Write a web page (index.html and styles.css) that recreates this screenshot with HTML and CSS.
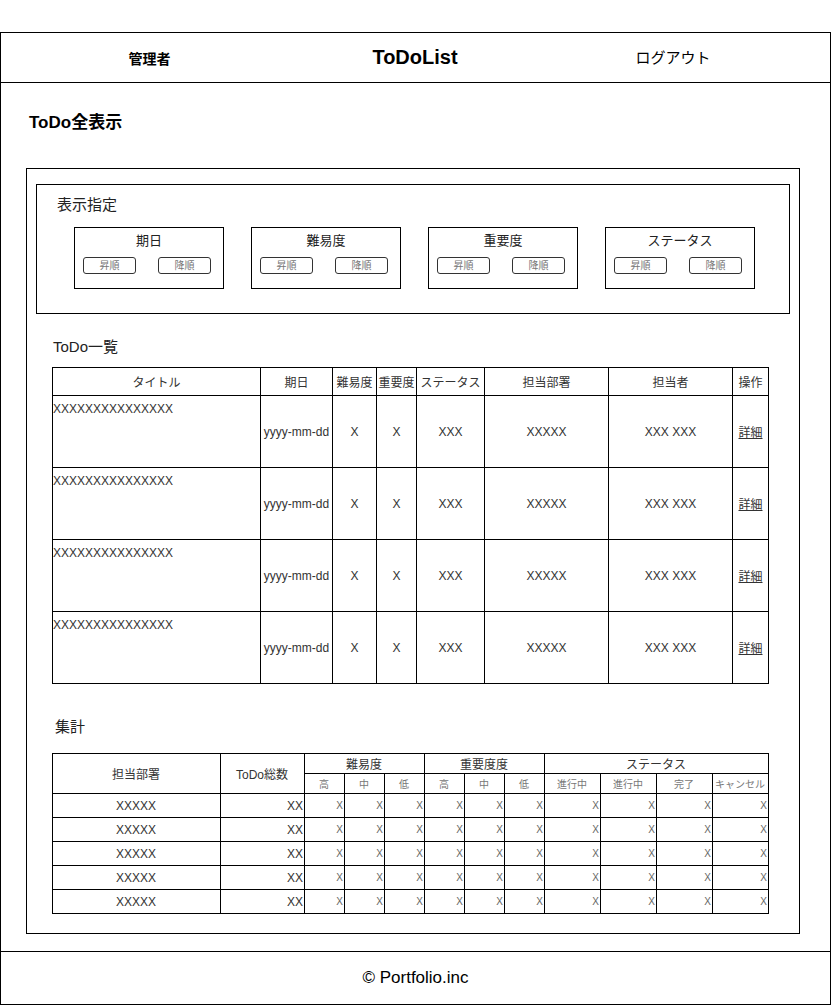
FILE: index.html
```html
<!DOCTYPE html>
<html lang="ja">
<head>
    <meta charset="UTF-8">
    <meta name="viewport" content="width=device-width, initial-scale=1.0">
    <title>ToDoList</title>
    <link rel="stylesheet" href="styles.css">
</head>
<body>
    <div class="frame">
        <header class="topbar">
            <div class="topbar-user">管理者</div>
            <div class="topbar-title">ToDoList</div>
            <div class="topbar-logout">ログアウト</div>
        </header>

        <main class="main">
            <h1 class="page-title">ToDo全表示</h1>

            <div class="panel">
                <section class="filter">
                    <h2 class="section-title">表示指定</h2>
                    <div class="filter-groups">
                        <div class="filter-group">
                            <div class="filter-label">期日</div>
                            <div class="filter-buttons">
                                <button class="sort-btn">昇順</button>
                                <button class="sort-btn">降順</button>
                            </div>
                        </div>
                        <div class="filter-group">
                            <div class="filter-label">難易度</div>
                            <div class="filter-buttons">
                                <button class="sort-btn">昇順</button>
                                <button class="sort-btn">降順</button>
                            </div>
                        </div>
                        <div class="filter-group">
                            <div class="filter-label">重要度</div>
                            <div class="filter-buttons">
                                <button class="sort-btn">昇順</button>
                                <button class="sort-btn">降順</button>
                            </div>
                        </div>
                        <div class="filter-group">
                            <div class="filter-label">ステータス</div>
                            <div class="filter-buttons">
                                <button class="sort-btn">昇順</button>
                                <button class="sort-btn">降順</button>
                            </div>
                        </div>
                    </div>
                </section>

                <section class="list">
                    <h2 class="section-title">ToDo一覧</h2>
                    <table class="todo-table">
                        <colgroup>
                            <col style="width:208px">
                            <col style="width:72px">
                            <col style="width:44px">
                            <col style="width:40px">
                            <col style="width:68px">
                            <col style="width:124px">
                            <col style="width:124px">
                            <col style="width:36px">
                        </colgroup>
                        <thead>
                            <tr>
                                <th>タイトル</th>
                                <th>期日</th>
                                <th>難易度</th>
                                <th>重要度</th>
                                <th>ステータス</th>
                                <th>担当部署</th>
                                <th>担当者</th>
                                <th>操作</th>
                            </tr>
                        </thead>
                        <tbody>
                            <tr>
                                <td class="todo-title">XXXXXXXXXXXXXXX</td>
                                <td>yyyy-mm-dd</td>
                                <td>X</td>
                                <td>X</td>
                                <td>XXX</td>
                                <td>XXXXX</td>
                                <td>XXX XXX</td>
                                <td><a href="#" class="detail-link">詳細</a></td>
                            </tr>
                            <tr>
                                <td class="todo-title">XXXXXXXXXXXXXXX</td>
                                <td>yyyy-mm-dd</td>
                                <td>X</td>
                                <td>X</td>
                                <td>XXX</td>
                                <td>XXXXX</td>
                                <td>XXX XXX</td>
                                <td><a href="#" class="detail-link">詳細</a></td>
                            </tr>
                            <tr>
                                <td class="todo-title">XXXXXXXXXXXXXXX</td>
                                <td>yyyy-mm-dd</td>
                                <td>X</td>
                                <td>X</td>
                                <td>XXX</td>
                                <td>XXXXX</td>
                                <td>XXX XXX</td>
                                <td><a href="#" class="detail-link">詳細</a></td>
                            </tr>
                            <tr>
                                <td class="todo-title">XXXXXXXXXXXXXXX</td>
                                <td>yyyy-mm-dd</td>
                                <td>X</td>
                                <td>X</td>
                                <td>XXX</td>
                                <td>XXXXX</td>
                                <td>XXX XXX</td>
                                <td><a href="#" class="detail-link">詳細</a></td>
                            </tr>
                        </tbody>
                    </table>
                </section>

                <section class="summary">
                    <h2 class="section-title">集計</h2>
                    <table class="summary-table">
                        <colgroup>
                            <col style="width:168px">
                            <col style="width:84px">
                            <col style="width:40px">
                            <col style="width:40px">
                            <col style="width:40px">
                            <col style="width:40px">
                            <col style="width:40px">
                            <col style="width:40px">
                            <col style="width:56px">
                            <col style="width:56px">
                            <col style="width:56px">
                            <col style="width:56px">
                        </colgroup>
                        <thead>
                            <tr class="head-top">
                                <th rowspan="2">担当部署</th>
                                <th rowspan="2">ToDo総数</th>
                                <th colspan="3">難易度</th>
                                <th colspan="3">重要度度</th>
                                <th colspan="4">ステータス</th>
                            </tr>
                            <tr class="head-sub">
                                <th>高</th>
                                <th>中</th>
                                <th>低</th>
                                <th>高</th>
                                <th>中</th>
                                <th>低</th>
                                <th>進行中</th>
                                <th>進行中</th>
                                <th>完了</th>
                                <th>キャンセル</th>
                            </tr>
                        </thead>
                        <tbody>
                            <tr>
                                <td class="dept">XXXXX</td>
                                <td class="total">XX</td>
                                <td>X</td><td>X</td><td>X</td>
                                <td>X</td><td>X</td><td>X</td>
                                <td>X</td><td>X</td><td>X</td><td>X</td>
                            </tr>
                            <tr>
                                <td class="dept">XXXXX</td>
                                <td class="total">XX</td>
                                <td>X</td><td>X</td><td>X</td>
                                <td>X</td><td>X</td><td>X</td>
                                <td>X</td><td>X</td><td>X</td><td>X</td>
                            </tr>
                            <tr>
                                <td class="dept">XXXXX</td>
                                <td class="total">XX</td>
                                <td>X</td><td>X</td><td>X</td>
                                <td>X</td><td>X</td><td>X</td>
                                <td>X</td><td>X</td><td>X</td><td>X</td>
                            </tr>
                            <tr>
                                <td class="dept">XXXXX</td>
                                <td class="total">XX</td>
                                <td>X</td><td>X</td><td>X</td>
                                <td>X</td><td>X</td><td>X</td>
                                <td>X</td><td>X</td><td>X</td><td>X</td>
                            </tr>
                            <tr>
                                <td class="dept">XXXXX</td>
                                <td class="total">XX</td>
                                <td>X</td><td>X</td><td>X</td>
                                <td>X</td><td>X</td><td>X</td>
                                <td>X</td><td>X</td><td>X</td><td>X</td>
                            </tr>
                        </tbody>
                    </table>
                </section>
            </div>
        </main>

        <footer class="footer">© Portfolio.inc</footer>
    </div>
</body>
</html>
```

FILE: styles.css
```css
body {
    margin: 0;
    padding-top: 32px;
    font-family: "Liberation Sans", "Noto Sans CJK JP", sans-serif;
    color: #000;
    background: #fff;
}

.frame {
    box-sizing: border-box;
    width: 831px;
    border: 1px solid #000;
}

/* header */
.topbar {
    display: grid;
    grid-template-columns: 297px 234px 1fr;
    align-items: center;
    height: 49px;
    padding-right: 16px;
    border-bottom: 1px solid #000;
}
.topbar-user {
    text-align: center;
    font-size: 14px;
    font-weight: bold;
}
.topbar-title {
    text-align: center;
    font-size: 20px;
    font-weight: bold;
}
.topbar-logout {
    text-align: center;
    font-size: 15px;
    margin-top: -2px;
}

/* main */
.main {
    padding: 30px 0 17px 25px;
}
.page-title {
    margin: 0 0 35px 3px;
    font-size: 17px;
    line-height: 20px;
    font-weight: bold;
}
.panel {
    box-sizing: border-box;
    width: 774px;
    border: 1px solid #000;
    padding: 15px 9px 19px 9px;
}
.section-title {
    margin: 0;
    font-size: 15px;
    line-height: 20px;
    font-weight: normal;
    color: #222;
}

/* filter */
.filter {
    box-sizing: border-box;
    height: 130px;
    border: 1px solid #000;
    padding: 10px 0 0 20px;
}
.filter-groups {
    display: flex;
    gap: 27px;
    margin-top: 12px;
    padding-left: 17px;
}
.filter-group {
    box-sizing: border-box;
    width: 150px;
    height: 62px;
    border: 1px solid #000;
    padding-top: 5px;
}
.filter-label {
    text-align: center;
    font-size: 13px;
    line-height: 16px;
    color: #222;
}
.filter-buttons {
    display: flex;
    gap: 22px;
    margin-top: 8px;
    padding-left: 8px;
}
.sort-btn {
    box-sizing: border-box;
    width: 53px;
    height: 17px;
    padding: 0;
    border: 1px solid #333;
    border-radius: 3px;
    background: #fff;
    font-family: inherit;
    font-size: 10px;
    line-height: 15px;
    color: #777;
}

/* todo list */
.list {
    padding: 23px 0 0 16px;
}
.list .section-title {
    margin-left: 1px;
}
.todo-table,
.summary-table {
    border-collapse: collapse;
    table-layout: fixed;
    width: 716px;
    color: #333;
}
.todo-table {
    margin-top: 10px;
}
.todo-table th,
.todo-table td {
    border: 1px solid #000;
    padding: 0;
    text-align: center;
    font-size: 12px;
    font-weight: normal;
    white-space: nowrap;
    overflow: hidden;
}
.todo-table th {
    height: 27px;
}
.todo-table td {
    height: 71px;
}
.todo-table .todo-title {
    height: 65px;
    text-align: left;
    vertical-align: top;
    padding-top: 6px;
}
.detail-link {
    color: #333;
}

/* summary */
.summary {
    padding: 33px 0 0 16px;
}
.summary .section-title {
    margin-left: 3px;
}
.summary-table {
    margin-top: 16px;
}
.summary-table th,
.summary-table td {
    border: 1px solid #000;
    padding: 0 1px 0 0;
    font-weight: normal;
    white-space: nowrap;
    overflow: hidden;
}
.summary-table th {
    font-size: 12px;
    text-align: center;
}
.head-top th,
.head-sub th {
    height: 19px;
}
.head-sub th {
    font-size: 10px;
    color: #777;
}
.summary-table td {
    height: 23px;
    font-size: 10px;
    color: #666;
    text-align: right;
}
.summary-table .dept {
    text-align: center;
    font-size: 12px;
    color: #333;
}
.summary-table .total {
    font-size: 12px;
    color: #333;
}

/* footer */
.footer {
    height: 52px;
    border-top: 1px solid #000;
    text-align: center;
    font-size: 17px;
    line-height: 52px;
}
```
